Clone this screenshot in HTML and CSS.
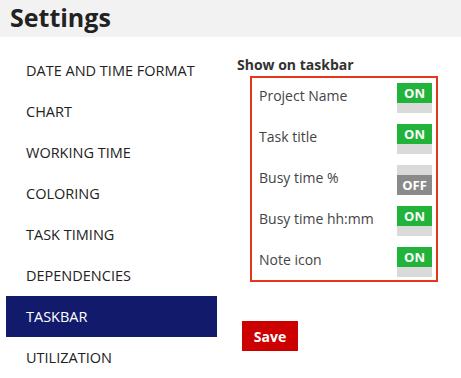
FILE: index.html
```html
<!DOCTYPE html>
<html lang="en">

<head>
  <meta charset="UTF-8">
  <meta name="viewport" content="width=device-width, initial-scale=1.0">
  <title>Settings</title>
  <link rel="stylesheet" href="styles.css">
</head>

<body>
  <div class="header">
    <h1>Settings</h1>
  </div>
  <div class="content">
    <ul class="menu">
      <li>DATE AND TIME FORMAT</li>
      <li>CHART</li>
      <li>WORKING TIME</li>
      <li>COLORING</li>
      <li>TASK TIMING</li>
      <li>DEPENDENCIES</li>
      <li class="active">TASKBAR</li>
      <li>UTILIZATION</li>
    </ul>
    <div class="panel">
      <div class="panel-title">Show on taskbar</div>
      <div class="options">
        <div class="option">
          <span class="label">Project Name</span>
          <span class="toggle on"><b>ON</b><i></i></span>
        </div>
        <div class="option">
          <span class="label">Task title</span>
          <span class="toggle on"><b>ON</b><i></i></span>
        </div>
        <div class="option">
          <span class="label">Busy time %</span>
          <span class="toggle off"><i></i><b>OFF</b></span>
        </div>
        <div class="option">
          <span class="label">Busy time hh:mm</span>
          <span class="toggle on"><b>ON</b><i></i></span>
        </div>
        <div class="option">
          <span class="label">Note icon</span>
          <span class="toggle on"><b>ON</b><i></i></span>
        </div>
      </div>
      <button class="save">Save</button>
    </div>
  </div>
</body>

</html>
```

FILE: styles.css
```css
* {
  margin: 0;
  padding: 0;
  box-sizing: border-box;
}

body {
  font-family: "Open Sans", sans-serif;
  color: #333;
  background: #fff;
}

.header {
  height: 37px;
  background: #f2f2f2;
  padding-left: 10px;
}

.header h1 {
  font-size: 25px;
  font-weight: bold;
  line-height: 35px;
  color: #222;
}

.content {
  display: flex;
}

.menu {
  list-style: none;
  width: 211px;
  margin-left: 6px;
  padding-top: 13px;
}

.menu li {
  height: 41px;
  line-height: 41px;
  padding-left: 20px;
  font-size: 14.5px;
  color: #222;
}

.menu li.active {
  background: #121a6c;
  color: #fff;
}

.panel {
  margin-left: 20px;
  padding-top: 19px;
}

.panel-title {
  font-size: 14px;
  font-weight: bold;
  line-height: 18px;
  color: #333;
}

.options {
  margin: 2px 0 0 13px;
  width: 188px;
  border: 2px solid #e8361d;
  padding: 5px 4px 3px 7px;
}

.option {
  height: 41px;
  display: flex;
  justify-content: space-between;
  align-items: flex-start;
}

.option:last-child {
  height: 30px;
}

.label {
  font-size: 14px;
  line-height: 18px;
  padding-top: 4px;
  color: #444;
}

.toggle {
  width: 35px;
  display: flex;
  flex-direction: column;
}

.toggle b {
  height: 20px;
  line-height: 20px;
  text-align: center;
  font-size: 13px;
  font-weight: bold;
  color: #fff;
}

.toggle i {
  height: 10px;
  background: #dadada;
}

.toggle.on b {
  background: #22b43a;
}

.toggle.off b {
  background: #8a8a8a;
}

.save {
  margin: 39px 0 0 5px;
  width: 56px;
  height: 30px;
  border: none;
  background: #cc0000;
  color: #fff;
  font-family: "Open Sans", sans-serif;
  font-size: 14px;
  font-weight: bold;
}
```
